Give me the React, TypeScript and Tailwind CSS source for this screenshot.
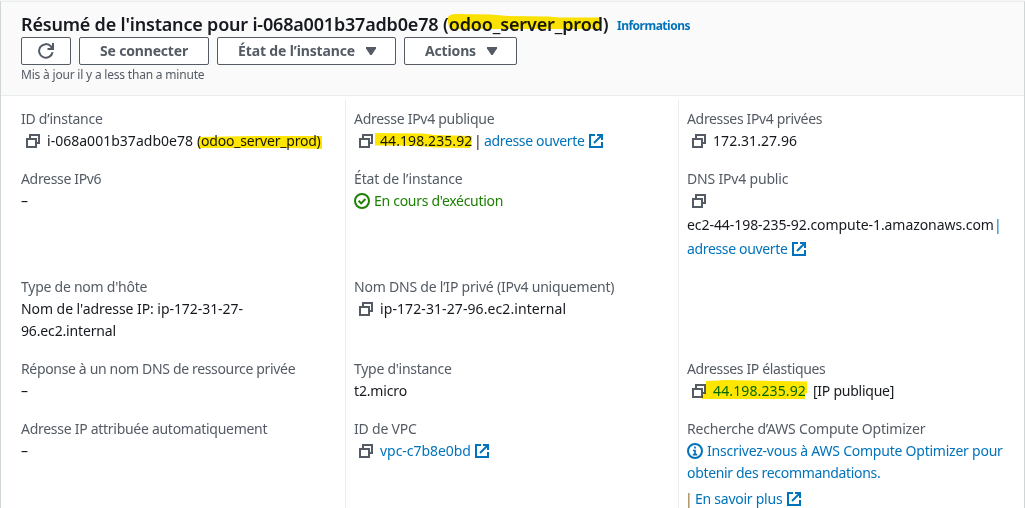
import type { ReactNode } from 'react';

function CopyIcon() {
  return (
    <svg viewBox="0 0 16 16" className="h-4 w-4 shrink-0" fill="none" stroke="#545b64" strokeWidth="2" shapeRendering="crispEdges">
      <path d="M2 6h9v8H2z" />
      <path d="M5 5.5V2h9v8h-2.5" />
    </svg>
  );
}

function ExternalIcon() {
  return (
    <svg viewBox="0 0 16 16" className="h-4 w-4 shrink-0" fill="none" stroke="#0073bb" strokeWidth="2">
      <path d="M7 2H2v12h12V9" />
      <path d="M9 2h5v5M14 2L6 10" />
    </svg>
  );
}

function CheckIcon() {
  return (
    <svg viewBox="0 0 16 16" className="h-4 w-4 shrink-0" fill="none" stroke="#1d8102" strokeWidth="2">
      <circle cx="8" cy="8" r="7" />
      <path d="M4.6 7.8l2.6 2.6 4.2-4.4" />
    </svg>
  );
}

function InfoIcon() {
  return (
    <svg viewBox="0 0 16 16" className="h-4 w-4 shrink-0" fill="none" stroke="#0073bb" strokeWidth="2">
      <circle cx="8" cy="8" r="7" />
      <path d="M8 3.4v2M6 7.5h2V12M5.8 11.6h4.4" strokeWidth="1.7" />
    </svg>
  );
}

function RefreshIcon() {
  return (
    <svg viewBox="0 0 16 16" className="h-4 w-4" fill="none" stroke="#545b64" strokeWidth="2">
      <path d="M14.6 9.2A6.8 6.8 0 1 1 13 3.4L15 5.6" />
      <path d="M15 0v6H9.5" />
      <path d="M11 6l4-4v4z" fill="#545b64" stroke="none" />
    </svg>
  );
}

function Caret() {
  return (
    <svg viewBox="0 0 12 10" className="h-2.5 w-3">
      <path d="M1 1h10v1.5L6.7 9H5.3L1 2.5z" fill="#545b64" />
    </svg>
  );
}

function Button({ className, children }: { className: string; children: ReactNode }) {
  return (
    <button
      className={`flex h-7 shrink-0 items-center rounded-[2px] border border-[#545b64] bg-white text-left text-sm font-bold text-[#545b64] ${className}`}
    >
      {children}
    </button>
  );
}

function Field({ label, labelClass, height = 'h-11', children }: { label: string; labelClass: string; height?: string; children: ReactNode }) {
  return (
    <div className={`shrink-0 ${height}`}>
      <div className={`text-[#545b64] ${labelClass}`}>{label}</div>
      {children}
    </div>
  );
}

function Row({ children, className = '' }: { children: ReactNode; className?: string }) {
  return <div className={`relative flex h-[22px] items-center ${className}`}>{children}</div>;
}

export default function App() {
  return (
    <div className="flex h-[508px] w-[1025px] flex-col overflow-hidden bg-[#f5f6f6] pt-px font-['Noto_Sans','Open_Sans',sans-serif] text-sm leading-[22px] whitespace-nowrap text-[#16191f]">
      <div className="flex flex-1 flex-col border-x border-t border-[#d0d5d5] border-t-[#eaeded] bg-white">
        <header className="h-[94px] border-b border-[#eaeded] bg-[#fafafa] pt-[10px] pl-5">
          <div className="relative flex h-6 items-center text-[18px] leading-6 font-semibold">
            <span className="w-[422px] tracking-[-0.19px]">Résumé de l&#39;instance pour i-068a001b37adb0e78</span>
            <span className="w-[174px] tracking-[-0.14px]">(odoo_server_prod)</span>
            <span className="pt-1 text-xs font-bold tracking-[-0.5px] text-[#0073bb]">Informations</span>
            <svg viewBox="0 0 154 16" className="absolute top-[2px] left-[427px] h-4 w-[154px] mix-blend-multiply">
              <path d="M0 3Q2 0 8 0L42 .5L60 2L100 2.5L112 3.5H152Q154 8 153 13L150 15H2Q-1 8 0 3z" fill="#ffe600" />
            </svg>
          </div>
          <div className="mt-px flex gap-2">
            <Button className="w-[50px] justify-center"><RefreshIcon /></Button>
            <Button className="w-[130px] pl-5 tracking-[-0.18px]">Se connecter</Button>
            <Button className="w-[179px] pl-5">
              <span className="w-[127px] tracking-[-0.14px]">État de l’instance</span>
              <Caret />
            </Button>
            <Button className="w-[113px] pl-5">
              <span className="w-[61px] tracking-[-0.15px]">Actions</span>
              <Caret />
            </Button>
          </div>
          <div className="text-xs leading-5 tracking-[-0.2px] text-[#545b64]">Mis à jour il y a less than a minute</div>
        </header>

        <main className="flex flex-1 pt-1">
          <section className="flex w-[344px] flex-col gap-4 pt-2 pl-5">
            <Field label="ID d’instance" labelClass="tracking-[-0.25px]">
              <Row className="pl-1">
                <CopyIcon />
                <span className="ml-1.5 w-[150px] tracking-[0.02px]">i-068a001b37adb0e78</span>
                <span className="tracking-[-0.2px]">(odoo_server_prod)</span>
                <svg viewBox="0 0 125 14" className="absolute top-[6px] left-[176px] h-[14px] w-[125px] mix-blend-multiply">
                  <path d="M2 1L60 0H125V13L108 12.5L98 12H1z" fill="#ffe600" />
                </svg>
              </Row>
            </Field>
            <Field label="Adresse IPv6" labelClass="tracking-[-0.33px]" height="h-[92px]">
              <Row>–</Row>
            </Field>
            <Field label="Type de nom d&#39;hôte" labelClass="tracking-[-0.25px]" height="h-[66px]">
              <Row className="tracking-[-0.06px]">Nom de l&#39;adresse IP: ip-172-31-27-</Row>
              <Row className="tracking-[-0.15px]">96.ec2.internal</Row>
            </Field>
            <Field label="Réponse à un nom DNS de ressource privée" labelClass="tracking-[-0.34px]">
              <Row>–</Row>
            </Field>
            <Field label="Adresse IP attribuée automatiquement" labelClass="tracking-[-0.28px]">
              <Row>–</Row>
            </Field>
          </section>

          <section className="flex w-[333px] flex-col gap-4 border-l border-[#eaeded] pt-2 pl-2">
            <Field label="Adresse IPv4 publique" labelClass="tracking-[-0.28px]">
              <Row className="pl-1">
                <CopyIcon />
                <span className="ml-1.5 w-[94px] tracking-[0.08px]">44.198.235.92</span>
                <span className="w-2.5">|</span>
                <span className="w-[104px] tracking-[-0.34px] text-[#0073bb]">adresse ouverte</span>
                <ExternalIcon />
                <svg viewBox="0 0 97 16" className="absolute top-[3px] left-[21px] h-4 w-[97px] mix-blend-multiply">
                  <path d="M0 0L48 .5L60 2L97 3V8L95 15L60 14.5L40 13L22 12.5H0z" fill="#ffe600" />
                </svg>
              </Row>
            </Field>
            <Field label="État de l’instance" labelClass="tracking-[-0.12px]" height="h-[92px]">
              <Row>
                <CheckIcon />
                <span className="ml-1 tracking-[-0.28px] text-[#1d8102]">En cours d&#39;exécution</span>
              </Row>
            </Field>
            <Field label="Nom DNS de l’IP privé (IPv4 uniquement)" labelClass="tracking-[-0.22px]" height="h-[66px]">
              <Row className="pl-1">
                <CopyIcon />
                <span className="ml-1.5 tracking-[0.09px]">ip-172-31-27-96.ec2.internal</span>
              </Row>
            </Field>
            <Field label="Type d&#39;instance" labelClass="tracking-[-0.28px]">
              <Row className="tracking-[-0.15px]">t2.micro</Row>
            </Field>
            <Field label="ID de VPC" labelClass="tracking-[-0.2px]">
              <Row className="pl-1">
                <CopyIcon />
                <span className="ml-1.5 w-[94px] tracking-[-0.04px] text-[#0073bb]">vpc-c7b8e0bd</span>
                <ExternalIcon />
              </Row>
            </Field>
          </section>

          <section className="flex flex-1 flex-col gap-4 border-l border-[#eaeded] pt-2 pl-2">
            <Field label="Adresses IPv4 privées" labelClass="tracking-[-0.34px]">
              <Row className="pl-1">
                <CopyIcon />
                <span className="ml-1.5 tracking-[0.06px]">172.31.27.96</span>
              </Row>
            </Field>
            <Field label="DNS IPv4 public" labelClass="tracking-[-0.18px]" height="h-[92px]">
              <Row className="pl-1"><CopyIcon /></Row>
              <Row className="mt-0.5">
                <span className="w-[307px] tracking-[-0.06px]">ec2-44-198-235-92.compute-1.amazonaws.com</span>
                <span className="text-[#0073bb]">|</span>
              </Row>
              <Row className="mt-0.5">
                <span className="w-[104px] tracking-[-0.34px] text-[#0073bb]">adresse ouverte</span>
                <ExternalIcon />
              </Row>
            </Field>
            <div className="h-[66px] shrink-0" />
            <Field label="Adresses IP élastiques" labelClass="tracking-[-0.35px]">
              <Row className="pl-1">
                <CopyIcon />
                <span className="ml-1.5 w-[100px] tracking-[0.12px] text-[#0073bb]">44.198.235.92</span>
                <span className="tracking-[-0.25px]">[IP publique]</span>
                <svg viewBox="0 0 105 19" className="absolute top-0 left-[15px] h-[19px] w-[105px] mix-blend-multiply">
                  <path d="M4 1L25 0L75 1L105 1.5V13L103 14V19H0V16L4 12z" fill="#ffe600" />
                </svg>
              </Row>
            </Field>
            <Field label="Recherche d’AWS Compute Optimizer" labelClass="tracking-[-0.19px]" height="h-[92px]">
              <Row className="text-[#0073bb]">
                <InfoIcon />
                <span className="ml-1 tracking-[-0.23px]">Inscrivez-vous à AWS Compute Optimizer pour</span>
              </Row>
              <Row className="tracking-[-0.33px] text-[#0073bb]">obtenir des recommandations.</Row>
              <Row className="mt-1 text-[#0073bb]">
                <span className="-ml-0.5 w-2.5 text-[#8a6a2a]">|</span>
                <span className="w-[91px] tracking-[-0.25px]">En savoir plus</span>
                <ExternalIcon />
              </Row>
            </Field>
          </section>
        </main>
      </div>
    </div>
  );
}
